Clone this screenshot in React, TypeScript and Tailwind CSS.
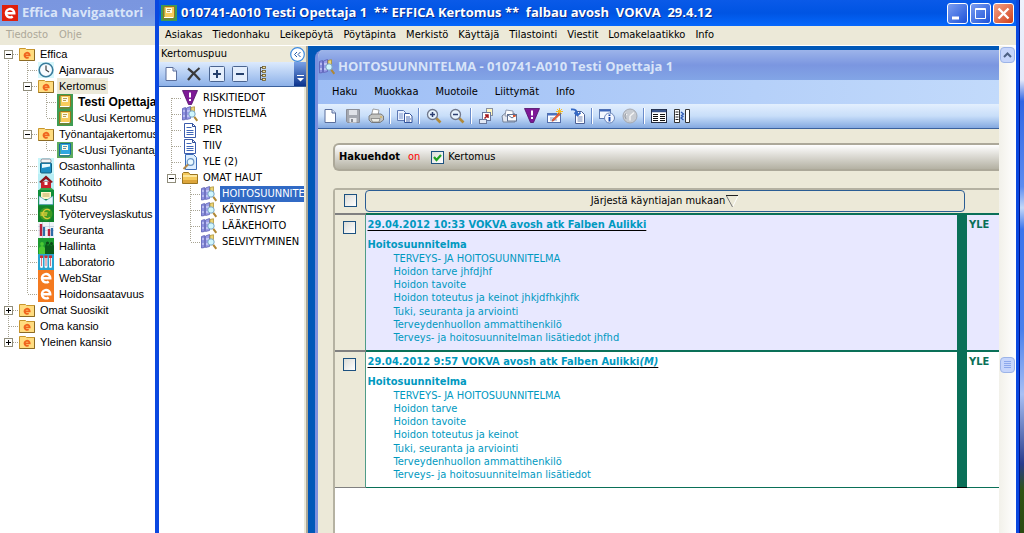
import React, { useState } from 'react';
import clsx from 'clsx';

interface TreeItem {
  label: string;
  icon: IconName;
  guides: string; // one character per indent level: | through, t branch, l last branch, f first
  toggle?: '+' | '-';
  bold?: boolean;
  selected?: 'soft' | 'strong';
}

interface Entry {
  title: string;
  mark?: string;
  lines: string[];
  tinted: boolean;
}

/* ---------- icons ---------- */

const EFolder = () => (
  <svg width="16" height="16" viewBox="0 0 16 16">
    <path d="M.5 2.500v12h15v-11H7.500l-1-1z" fill="#ffdc80" stroke="#c8962c" />
    <path d="M.5 14.500h15v-11" fill="none" stroke="#8c6a24" />
    <path d="M5.500 9.300h5.200a2.600 2.600 0 1 0-1 2.100" fill="none" stroke="#f0641e" strokeWidth="1.800" />
  </svg>
);

const EBox = ({ color, size = 16 }: { color: string; size?: number }) => (
  <svg width={size} height={size} viewBox="0 0 16 16">
    <rect width="16" height="16" fill={color} />
    <path d="M4 8.300h8.300a4.200 4.200 0 1 0-1.600 3.200" fill="none" stroke="#fff" strokeWidth="2.400" />
  </svg>
);

const Clock = () => (
  <svg width="16" height="16" viewBox="0 0 16 16">
    <rect width="16" height="16" fill="#d8f8fc" />
    <circle cx="8" cy="8" r="6.800" fill="#f8fcff" stroke="#3a7c9c" strokeWidth="1.600" />
    <path d="M8 3.500V8l3 2" fill="none" stroke="#444" strokeWidth="1.200" />
  </svg>
);

const Book = ({ back, fill, edge }: { back: string; fill: string; edge: string }) => (
  <svg width="16" height="16" viewBox="0 0 16 16">
    <rect width="16" height="16" fill={back} />
    <path d="M3.500 1.500h9.500v10.500H3.500z" fill={fill} />
    <path d="M2.500 2v12h9.500l1.500-2V1.500H4z" fill="none" stroke={edge} />
    <path d="M3 12.500h9.500" stroke="#fff" />
    <rect x="5" y="3" width="6" height="5" fill="#fffbe4" />
    <path d="M6 4.500h4M6 6.500h3" stroke={edge} strokeWidth=".7" />
  </svg>
);

const Bed = () => (
  <svg width="16" height="16" viewBox="0 0 16 16">
    <rect width="16" height="16" fill="#c9f6fb" />
    <rect x="3" y="1" width="10" height="4" rx="1.500" fill="#f4f4f4" stroke="#667" strokeWidth=".7" />
    <rect x="2.500" y="5" width="11" height="10" rx="1" fill="#1f8fc4" stroke="#12607f" />
    <path d="M4 6h8v2.500L4 10z" fill="#e8fbff" />
  </svg>
);

const House = () => (
  <svg width="16" height="16" viewBox="0 0 16 16">
    <rect width="16" height="16" fill="#b8eef5" />
    <path d="M1 16l3-3h8l4 3z" fill="#3aa044" />
    <path d="M3 7.500h10V14H3z" fill="#c8202c" />
    <path d="M1 8l7-6.500L15 8l-2 1-5-4-5 4z" fill="#8c141c" />
    <rect x="6.500" y="8" width="3" height="3" fill="#fff" />
  </svg>
);

const Invite = () => (
  <svg width="16" height="16" viewBox="0 0 16 16">
    <rect width="16" height="16" fill="#0f8f3a" />
    <rect x="3" y="2" width="10" height="7" fill="#fff6c8" />
    <path d="M4.500 4h7M4.500 6h7" stroke="#bfa75a" />
    <path d="M1 6l7 4.500L15 6v8.500H1z" fill="#e8f8ff" stroke="#4a94b8" strokeWidth=".6" />
  </svg>
);

const Euro = () => (
  <svg width="16" height="16" viewBox="0 0 16 16">
    <rect width="16" height="16" fill="#12822c" />
    <circle cx="8" cy="8" r="6.500" fill="#3f9a24" />
    <path d="M12 4.500A4.500 4.500 0 1 0 12 11.500M2.500 7h7M2.500 9h6.500" fill="none" stroke="#d8cc38" strokeWidth="1.300" />
  </svg>
);

const Bars = () => (
  <svg width="16" height="16" viewBox="0 0 16 16">
    <rect width="16" height="16" fill="#eef3f8" />
    <path d="M0 4.500h16M0 8.500h16M4.500 0v16M11.500 0v16" stroke="#bccbdc" strokeWidth=".7" />
    <path d="M3 2v12M11 7v7" stroke="#b8203c" strokeWidth="2.400" />
    <path d="M6 5v9M14 6v8" stroke="#2f6da8" strokeWidth="2.200" />
  </svg>
);

const Crowd = () => (
  <svg width="16" height="16" viewBox="0 0 16 16">
    <rect width="16" height="16" fill="#1c9a30" />
    <path d="M7 16V8q1-4 3 0 2-4 3 0 2-3 3 0v8z" fill="#0a5c1a" />
    <circle cx="9.500" cy="5" r="1.600" fill="#0b4a18" />
    <circle cx="13.500" cy="5.500" r="1.500" fill="#0b4a18" />
    <circle cx="4" cy="6" r="1.900" fill="#4cc834" />
    <path d="M1 16v-6q3-4 6 0v6z" fill="#4cc834" />
  </svg>
);

const Tubes = () => (
  <svg width="16" height="16" viewBox="0 0 16 16">
    <rect width="16" height="16" fill="#28a4d0" />
    {[2, 6.500, 11].map(x => (
      <g key={x}>
        <rect x={x} y="2" width="3" height="12" rx="1.500" fill="#eef6fa" />
        <rect x={x} y="1.500" width="3" height="2.500" fill="#d02c34" />
        <path d={`M${x + 1.500} 4v8`} stroke="#d8707c" />
      </g>
    ))}
  </svg>
);

const Alert = () => (
  <svg width="16" height="16" viewBox="0 0 16 16">
    <path d="M.5.500h15L9.500 14.500h-3z" fill="#7e1a96" stroke="#4e0c66" strokeWidth=".8" />
    <path d="M8 2.500v5" stroke="#fff" strokeWidth="2" />
    <rect x="7" y="9" width="2" height="2" fill="#fff" />
  </svg>
);

const BookSearch = () => (
  <svg width="16" height="16" viewBox="0 0 16 16">
    <path d="M.5 2.500l3-1v12l-3 .5z" fill="#8c90e0" stroke="#5a5eb4" strokeWidth=".8" />
    <path d="M4.500 2l4-1.500v12l-4 1z" fill="#9a9eea" stroke="#5a5eb4" strokeWidth=".8" />
    <path d="M9 1.500l3.500-.8v8H9z" fill="#ecd474" stroke="#a58a2c" strokeWidth=".7" />
    <path d="M1 5h2M5 5h3M1 10h2M5 10h2" stroke="#e4e6ff" />
    <circle cx="10" cy="8" r="3.200" fill="#d0f6fd" stroke="#7ba6c4" />
    <path d="M12.300 10.800l3 4" stroke="#b08834" strokeWidth="2" />
  </svg>
);

const Doc = () => (
  <svg width="16" height="16" viewBox="0 0 16 16">
    <path d="M2.500 1.500h8l3 3v11h-11z" fill="#fff" stroke="#3c5cac" />
    <path d="M10.500 1.500v3h3" fill="none" stroke="#2d4a94" />
    <path d="M4.500 5.500h5M4.500 8.500h7M4.500 10.500h7M4.500 12.500h7" stroke="#3f66b8" />
  </svg>
);

const DocSearch = () => (
  <svg width="16" height="16" viewBox="0 0 16 16">
    <path d="M3.500.5h8l3 3v12h-11z" fill="#dceeff" stroke="#3b6cb8" />
    <circle cx="8.500" cy="8" r="3.300" fill="#eafaff" stroke="#6a94c4" strokeWidth="1.200" />
    <path d="M6 10.500L1.500 15" stroke="#b48a4a" strokeWidth="2" />
  </svg>
);

const Folder = () => (
  <svg width="16" height="16" viewBox="0 0 16 16">
    <path d="M.5 3.500v10h15v-9H8L6.500 2.500h-5z" fill="#f4c95a" stroke="#9a7420" />
    <path d="M1 6h14" stroke="#fff0b4" strokeWidth="1.500" />
    <path d="M1 10h14v3H1z" fill="#dca53a" />
  </svg>
);

const Page = () => (
  <svg width="16" height="16" viewBox="0 0 16 16">
    <path d="M3 1.500h7l3.500 3.500v9.500H3z" fill="#fff" stroke="#5b6f9c" />
    <path d="M10 1.500V5h3.500" fill="#d5e1f8" stroke="#5b6f9c" />
  </svg>
);

const Cross = () => (
  <svg width="16" height="16" viewBox="0 0 16 16">
    <path d="M2 2.500Q8 7 14 14M13.500 2Q7 7 2 14" fill="none" stroke="#3a3a3a" strokeWidth="2.200" />
  </svg>
);

const BoxSign = ({ plus }: { plus?: boolean }) => (
  <svg width="16" height="16" viewBox="0 0 16 16">
    <rect x=".5" y=".5" width="15" height="15" rx="1" fill="#e4eefc" stroke="#4a6490" />
    <path d={plus ? 'M4 8h8M8 4v8' : 'M4 8h8'} stroke="#25406c" strokeWidth="2" />
  </svg>
);

const Chain = () => (
  <svg width="16" height="16" viewBox="0 0 16 16">
    <path d="M5.500 1v13M5 1.500h2M5 5.500h2M5 9.500h2M5 13.500h2" stroke="#555" fill="none" />
    {[.5, 4.500, 8.500, 12.500].map(y => (
      <rect key={y} x="7.500" y={y} width="3" height="2" fill="#f4e2a0" stroke="#6b5a28" strokeWidth=".8" />
    ))}
  </svg>
);

const Disk = () => (
  <svg width="16" height="16" viewBox="0 0 16 16">
    <path d="M1.500 1.500h13v13h-12l-1-1z" fill="#a4a8b0" stroke="#8a8e98" />
    <rect x="4" y="2" width="8" height="5" fill="#dfe2e8" />
    <rect x="4.500" y="10" width="7" height="4.500" fill="#e6e8ec" />
    <rect x="6" y="11" width="2" height="3" fill="#878b94" />
  </svg>
);

const Printer = () => (
  <svg width="16" height="16" viewBox="0 0 16 16">
    <path d="M5 1l6 1-1 5H3.500z" fill="#fff" stroke="#8a8a8a" strokeWidth=".8" />
    <path d="M1 8l3-2h9l2.500 2v4l-3.500 2.500H3.500L1 12z" fill="#c4c4c0" stroke="#6a6a6a" strokeWidth=".8" />
    <path d="M3 10.500h9l-1 3.500H4.500z" fill="#ecebe4" stroke="#777" strokeWidth=".7" />
    <path d="M12 9h2" stroke="#dcae34" strokeWidth="1.200" />
  </svg>
);

const Copy = () => (
  <svg width="16" height="16" viewBox="0 0 16 16">
    <path d="M.5 2.500h6l2 2v8h-8z" fill="#e8f0ff" stroke="#5c78b4" />
    <path d="M2 6h4M2 8h4M2 10h4" stroke="#7c96cc" />
    <path d="M7.500 5.500h5l2.500 2.500v6.500H7.500z" fill="#fff" stroke="#34549c" />
    <path d="M9 9h4M9 11h5M9 13h4" stroke="#4a6cb4" />
  </svg>
);

const Zoom = ({ plus }: { plus?: boolean }) => (
  <svg width="16" height="16" viewBox="0 0 16 16">
    <path d="M10 10l4.500 4.500" stroke="#b08a3c" strokeWidth="2.600" />
    <circle cx="6.500" cy="6.500" r="5" fill="#e6f2fc" stroke="#70788c" strokeWidth="1.300" />
    <path d={plus ? 'M4 6.500h5M6.500 4v5' : 'M4 6.500h5'} stroke="#2c3e70" strokeWidth="1.500" />
  </svg>
);

const Export = () => (
  <svg width="16" height="16" viewBox="0 0 16 16">
    <rect x="8.500" y=".5" width="6" height="7" fill="#fff6bc" stroke="#8890a0" />
    <rect x="4.500" y="4.500" width="8" height="8" fill="#fff" stroke="#68789c" />
    <rect x="1.500" y="11.500" width="7" height="4" fill="#e2e8f4" stroke="#68789c" />
    <path d="M6.500 10.500l3.500-3.500M7 7h3v3" fill="none" stroke="#a4181c" strokeWidth="1.500" />
  </svg>
);

const Mail = () => (
  <svg width="16" height="16" viewBox="0 0 16 16">
    <path d="M1 8l6-5 7 3v8H2z" fill="#e4e9f2" stroke="#6c7890" strokeWidth=".9" />
    <path d="M5 2l7 1v5H4z" fill="#fff" stroke="#78849c" strokeWidth=".8" />
    <rect x="6.500" y="6.500" width="9" height="6.500" fill="#fff" stroke="#5f7090" />
    <path d="M7 7l4 3 4-3" fill="none" stroke="#5f7090" />
    <rect x="12" y="7" width="2.500" height="2" fill="#e0562c" />
  </svg>
);

const Compose = () => (
  <svg width="16" height="16" viewBox="0 0 16 16">
    <rect x=".5" y="5.500" width="13" height="9" fill="#fff" stroke="#5470ac" />
    <path d="M1 6.500h12" stroke="#4a72c4" strokeWidth="2" />
    <path d="M3 10h4M3 12h7" stroke="#7f96c4" />
    <path d="M12.500 0v7M9 3.500h7M10 1l5 5M15 1l-5 5" stroke="#f4bc28" />
    <path d="M13 6.500l-6 6-2 .8.800-2 6-6z" fill="#f0603c" stroke="#b43c20" strokeWidth=".6" />
  </svg>
);

const Import = () => (
  <svg width="16" height="16" viewBox="0 0 16 16">
    <path d="M5.500 3.500h6l3 3v9h-9z" fill="#fff" stroke="#4c6094" />
    <path d="M7.500 9h5M7.500 11h5M7.500 13h5" stroke="#7486b4" />
    <path d="M1 1.500q6-1 6.500 5M4.500 4.500l3 3 3-3" fill="none" stroke="#3468c4" strokeWidth="1.800" />
  </svg>
);

const Details = () => (
  <svg width="16" height="16" viewBox="0 0 16 16">
    <rect x=".5" y="1.500" width="11" height="9" fill="#f4f8ff" stroke="#5c78b0" />
    <path d="M1 2.500h10" stroke="#3f66b8" strokeWidth="2" />
    <circle cx="10.500" cy="10" r="5" fill="#f2f6ff" stroke="#6c86b8" />
    <path d="M10.500 9v4.500M10.500 6.500v1.500" stroke="#1c48a8" strokeWidth="1.900" />
  </svg>
);

const History = () => (
  <svg width="16" height="16" viewBox="0 0 16 16">
    <circle cx="8" cy="8" r="7" fill="#c8ccd2" stroke="#a4a8b0" />
    <path d="M8 8l4-3.500M8 8v4.500M3 5l2 2" stroke="#f4f4f4" strokeWidth="1.500" />
    <path d="M4 11a5 5 0 0 1 0-6" fill="none" stroke="#989ca4" />
  </svg>
);

const Columns = () => (
  <svg width="16" height="16" viewBox="0 0 16 16">
    <rect x=".5" y="1.500" width="15" height="13" fill="#fff" stroke="#222c44" />
    <path d="M1 3h14" stroke="#38548c" strokeWidth="2.500" />
    <path d="M2 6.500h5M2 8.500h5M2 10.500h5M2 12.500h5M9 6.500h5M9 8.500h5M9 10.500h5M9 12.500h5" stroke="#111" />
  </svg>
);

const Split = () => (
  <svg width="16" height="16" viewBox="0 0 16 16">
    <path d="M.5 1.500h5v13h-5zM11.500 1.500h4v13h-4z" fill="#fff" stroke="#333" />
    <path d="M1.500 4h3M1.500 6.500h3M1.500 9h3M1.500 11.500h3" stroke="#222" />
    <path d="M7 4l2.500 2L7 8M9.500 8L7 10l2.500 2" fill="none" stroke="#2c58b4" strokeWidth="1.300" />
  </svg>
);

const icons = {
  eFolder: <EFolder />,
  clock: <Clock />,
  book: <Book back="#3f9c52" fill="#f8cc5c" edge="#96741c" />,
  blueBook: <Book back="#5cab5e" fill="#2fa8e0" edge="#16689c" />,
  bed: <Bed />,
  house: <House />,
  invite: <Invite />,
  euro: <Euro />,
  bars: <Bars />,
  crowd: <Crowd />,
  tubes: <Tubes />,
  web: <EBox color="#f47a20" />,
  alert: <Alert />,
  bookSearch: <BookSearch />,
  doc: <Doc />,
  docSearch: <DocSearch />,
  folder: <Folder />,
  page: <Page />,
  cross: <Cross />,
  plusBox: <BoxSign plus />,
  minusBox: <BoxSign />,
  chain: <Chain />,
  disk: <Disk />,
  printer: <Printer />,
  copy: <Copy />,
  zoomIn: <Zoom plus />,
  zoomOut: <Zoom />,
  export: <Export />,
  mail: <Mail />,
  compose: <Compose />,
  import: <Import />,
  details: <Details />,
  history: <History />,
  columns: <Columns />,
  split: <Split />
};

type IconName = keyof typeof icons;

/* ---------- data ---------- */

const navTree: TreeItem[] = [
  { label: 'Effica', icon: 'eFolder', guides: 'f', toggle: '-' },
  { label: 'Ajanvaraus', icon: 'clock', guides: '|t' },
  { label: 'Kertomus', icon: 'eFolder', guides: '|t', toggle: '-', selected: 'soft' },
  { label: 'Testi Opettaja', icon: 'book', guides: '||t', bold: true },
  { label: '<Uusi Kertomus>', icon: 'book', guides: '||l' },
  { label: 'Työnantajakertomus', icon: 'eFolder', guides: '|t', toggle: '-' },
  { label: '<Uusi Työnantaj', icon: 'blueBook', guides: '||l' },
  { label: 'Osastonhallinta', icon: 'bed', guides: '|t' },
  { label: 'Kotihoito', icon: 'house', guides: '|t' },
  { label: 'Kutsu', icon: 'invite', guides: '|t' },
  { label: 'Työterveyslaskutus', icon: 'euro', guides: '|t' },
  { label: 'Seuranta', icon: 'bars', guides: '|t' },
  { label: 'Hallinta', icon: 'crowd', guides: '|t' },
  { label: 'Laboratorio', icon: 'tubes', guides: '|t' },
  { label: 'WebStar', icon: 'web', guides: '|t' },
  { label: 'Hoidonsaatavuus', icon: 'web', guides: '|l' },
  { label: 'Omat Suosikit', icon: 'eFolder', guides: 't', toggle: '+' },
  { label: 'Oma kansio', icon: 'eFolder', guides: 't' },
  { label: 'Yleinen kansio', icon: 'eFolder', guides: 'l', toggle: '+' }
];

const recordTree: TreeItem[] = [
  { label: 'RISKITIEDOT', icon: 'alert', guides: 'f' },
  { label: 'YHDISTELMÄ', icon: 'bookSearch', guides: 't' },
  { label: 'PER', icon: 'doc', guides: 't' },
  { label: 'TIIV', icon: 'doc', guides: 't' },
  { label: 'YLE (2)', icon: 'docSearch', guides: 't' },
  { label: 'OMAT HAUT', icon: 'folder', guides: 'l', toggle: '-' },
  { label: 'HOITOSUUNNITE', icon: 'bookSearch', guides: ' t', selected: 'strong' },
  { label: 'KÄYNTISYY', icon: 'bookSearch', guides: ' t' },
  { label: 'LÄÄKEHOITO', icon: 'bookSearch', guides: ' t' },
  { label: 'SELVIYTYMINEN', icon: 'bookSearch', guides: ' l' }
];

const mainMenu = [
  'Asiakas', 'Tiedonhaku', 'Leikepöytä', 'Pöytäpinta', 'Merkistö',
  'Käyttäjä', 'Tilastointi', 'Viestit', 'Lomakelaatikko', 'Info'
];

const viewMenu = ['Haku', 'Muokkaa', 'Muotoile', 'Liittymät', 'Info'];

const viewTools: [IconName, string][][] = [
  [['page', 'Uusi'], ['disk', 'Tallenna'], ['printer', 'Tulosta']],
  [['copy', 'Kopioi']],
  [['zoomIn', 'Suurenna'], ['zoomOut', 'Pienennä']],
  [['export', 'Vie'], ['mail', 'Viesti'], ['alert', 'Riskitiedot'], ['compose', 'Kirjaa'], ['import', 'Tuo']],
  [['details', 'Tiedot'], ['history', 'Historia']],
  [['columns', 'Sarakkeet'], ['split', 'Jako']]
];

const recordTools: [IconName, string][] = [
  ['page', 'Uusi'],
  ['cross', 'Poista'],
  ['plusBox', 'Avaa kaikki'],
  ['minusBox', 'Sulje kaikki'],
  ['chain', 'Rakenne']
];

const entries: Entry[] = [
  {
    title: '29.04.2012 10:33 VOKVA avosh atk Falben Aulikki',
    tinted: true,
    lines: [
      'TERVEYS- JA HOITOSUUNNITELMA',
      'Hoidon tarve jhfdjhf',
      'Hoidon tavoite',
      'Hoidon toteutus ja keinot jhkjdfhkjhfk',
      'Tuki, seuranta ja arviointi',
      'Terveydenhuollon ammattihenkilö',
      'Terveys- ja hoitosuunnitelman lisätiedot jhfhd'
    ]
  },
  {
    title: '29.04.2012 9:57 VOKVA avosh atk Falben Aulikki',
    mark: '(M)',
    tinted: false,
    lines: [
      'TERVEYS- JA HOITOSUUNNITELMA',
      'Hoidon tarve',
      'Hoidon tavoite',
      'Hoidon toteutus ja keinot',
      'Tuki, seuranta ja arviointi',
      'Terveydenhuollon ammattihenkilö',
      'Terveys- ja hoitosuunnitelman lisätiedot'
    ]
  }
];

/* ---------- parts ---------- */

const guidePaths: Record<string, string> = {
  '|': 'M8.500 0V16',
  t: 'M8.500 0V16M8.500 8.500H19',
  l: 'M8.500 0V8M8.500 8.500H19',
  f: 'M8.500 8V16M8.500 8.500H19',
  ' ': ''
};

const Guide = ({ kind, toggle }: { kind: string; toggle?: '+' | '-' }) => (
  <svg width="19" height="16" viewBox="0 0 19 16" className="shrink-0" shapeRendering="crispEdges">
    <path d={guidePaths[kind]} stroke="#a8a493" strokeDasharray="1 1" fill="none" />
    {toggle && (
      <>
        <rect x="4.500" y="4.500" width="8" height="8" fill="#fff" stroke="#8f8c7a" />
        <path d={toggle === '+' ? 'M6 8.500h5M8.500 6v5' : 'M6 8.500h5'} stroke="#000" />
      </>
    )}
  </svg>
);

const Tree = ({ items, label }: { items: TreeItem[]; label: string }) => (
  <ul aria-label={label}>
    {items.map((item, i) => (
      <li key={i} className="flex h-4 items-center whitespace-nowrap">
        {item.guides.split('').map((g, n) => (
          <Guide key={n} kind={g} toggle={n === item.guides.length - 1 ? item.toggle : undefined} />
        ))}
        <span className="shrink-0">{icons[item.icon]}</span>
        <span
          className={clsx(
            'ml-[3px] h-4 px-[2px] leading-4',
            item.bold && 'text-[12px] font-bold',
            item.selected === 'soft' && 'bg-[#ece9d8]',
            item.selected === 'strong' && 'bg-[#316ac5] text-white'
          )}
        >
          {item.label}
        </span>
      </li>
    ))}
  </ul>
);

const Tool = ({ icon, label }: { icon: IconName; label: string }) => (
  <button aria-label={label} title={label} className="flex h-6 w-[23px] shrink-0 items-center justify-center">
    {icons[icon]}
  </button>
);

const CheckBox = ({ label, initial = false }: { label: string; initial?: boolean }) => {
  const [checked, setChecked] = useState(initial);
  return (
    <span className="relative inline-flex h-[13px] w-[13px] shrink-0">
      <input
        type="checkbox"
        aria-label={label}
        checked={checked}
        onChange={() => setChecked(!checked)}
        className="h-[13px] w-[13px] appearance-none border border-[#1c5180] bg-linear-to-br from-[#dcdcd7] to-white"
      />
      {checked && (
        <svg viewBox="0 0 13 13" className="pointer-events-none absolute inset-0">
          <path d="M3 6l2.500 3L10 4" fill="none" stroke="#21a121" strokeWidth="2.200" />
        </svg>
      )}
    </span>
  );
};

const Navigator = () => (
  <aside className="flex w-[155px] shrink-0 flex-col overflow-hidden bg-white font-['Liberation_Sans',Arial,sans-serif] text-[11px]">
    <header className="flex h-[26px] shrink-0 items-center gap-1 bg-linear-to-b from-[#7a96df] via-[#7b97e0] to-[#82a5e4] pl-[2px]">
      <EBox color="#e0200c" />
      <h1 className="whitespace-nowrap font-['Open_Sans',sans-serif] text-[13px] font-bold text-[#d8e4f8]">Effica Navigaattori</h1>
    </header>
    <nav className="mb-px flex h-[19px] shrink-0 items-center gap-[11px] bg-[#ece9d8] pl-[6px] font-['DejaVu_Sans_Condensed',Tahoma,sans-serif] text-[#aca899]">
      <button>Tiedosto</button>
      <button>Ohje</button>
    </nav>
    <Tree items={navTree} label="Effica" />
  </aside>
);

const RecordPanel = () => (
  <section className="flex w-[147px] shrink-0 flex-col overflow-hidden bg-[#ece9d8]">
    <header className="flex h-4 shrink-0 items-center justify-between pl-[2px]">
      <h2>Kertomuspuu</h2>
      <button aria-label="Piilota" className="mr-px">
        <svg width="15" height="15" viewBox="0 0 15 15">
          <circle cx="7.500" cy="7.500" r="6.800" fill="#fff" stroke="#3c8ae0" strokeWidth="1.200" />
          <path d="M7 5L4.500 7.500 7 10M10.500 5L8 7.500l2.500 2.500" fill="none" stroke="#2458a8" />
        </svg>
      </button>
    </header>
    <div className="flex h-[25px] shrink-0 items-center justify-between border-b border-[#3b619c] bg-linear-to-b from-[#dceafd] to-[#8db1e8]">
      <div className="flex">
        {recordTools.map(([icon, label]) => <Tool key={label} icon={icon} label={label} />)}
      </div>
      <button aria-label="Lisää" className="flex h-full w-3 items-end justify-center bg-linear-to-b from-[#7ba2e7] to-[#0a328c] pb-1">
        <svg width="7" height="7" viewBox="0 0 7 7">
          <path d="M0 .5h7" stroke="#fff" />
          <path d="M0 3h7L3.500 6.500z" fill="#fff" />
        </svg>
      </button>
    </div>
    <div className="mr-[2px] flex-1 overflow-hidden bg-white pl-1 pt-[3px]">
      <Tree items={recordTree} label="Kertomuspuu" />
    </div>
  </section>
);

const EntryTable = () => (
  <table className="w-full table-fixed border-collapse text-left">
    <colgroup>
      <col className="w-[30px]" />
      <col />
      <col className="w-[10px]" />
      <col className="w-8" />
    </colgroup>
    <thead>
      <tr className="h-6 bg-[#ece9d8]">
        <th className="border-b-2 border-[#808080] p-0 text-center leading-none">
          <CheckBox label="Valitse kaikki" />
        </th>
        <th colSpan={2} className="border-b-2 border-[#0a7058] p-0 pb-px pr-[2px] font-normal">
          <button className="flex h-[22px] w-full items-center justify-center rounded border border-[#2a5d94]">
            Järjestä käyntiajan mukaan
            <svg width="14" height="14" viewBox="0 0 14 14">
              <path d="M13 2L7.500 13" stroke="#fff" />
              <path d="M1 1.500h12" stroke="#222" />
              <path d="M1.500 2l6 11" stroke="#777" />
            </svg>
          </button>
        </th>
        <th className="border-b-2 border-[#0a7058] p-0" />
      </tr>
    </thead>
    <tbody className="[&>tr:last-child>td]:border-b">
      {entries.map(entry => (
        <tr key={entry.title} className={clsx('align-top', entry.tinted ? 'bg-[#e8e8ff]' : 'bg-white')}>
          <td className="border-b-2 border-r border-b-[#808080] border-r-[#4f9c88] bg-[#ece9d8] p-0 pt-[6px] text-center leading-none">
            <CheckBox label={entry.title} />
          </td>
          <td className="border-b-2 border-[#0a7058] p-0 pb-[6px] pl-[2px] pt-[3px] text-[#0099bf]">
            <a href="#entry" className="block font-bold leading-[14px] underline decoration-black decoration-1 underline-offset-2">
              {entry.title}
              {entry.mark && <em>{entry.mark}</em>}
            </a>
            <h3 className="mt-[6px] font-bold leading-[14px]">Hoitosuunnitelma</h3>
            <ul className="flex h-[92px] flex-col justify-between pl-[26px] leading-[13px]">
              {entry.lines.map(line => <li key={line}>{line}</li>)}
            </ul>
          </td>
          <td className="bg-[#0a7058] p-0" />
          <td className="border-b-2 border-[#0a7058] p-0 pl-[2px] pt-[3px] font-bold leading-[14px] text-[#0a7058]">YLE</td>
        </tr>
      ))}
    </tbody>
  </table>
);

const RecordView = () => (
  <section className="mt-1 flex min-w-0 flex-1 flex-col overflow-hidden rounded-tl-lg border-l-[3px] border-[#7b90de] bg-[#ece9d8]">
    <header className="flex h-[30px] shrink-0 items-center gap-[3px] bg-linear-to-b from-[#9db4ea] via-[#7b96e0] to-[#82a5e6] pl-px pt-1">
      {icons.bookSearch}
      <h2 className="whitespace-nowrap font-['Open_Sans',sans-serif] text-[13px] font-bold text-[#d8e4f8]">
        HOITOSUUNNITELMA - 010741-A010 Testi Opettaja 1
      </h2>
    </header>
    <nav className="flex h-6 shrink-0 items-center gap-[17px] bg-linear-to-r from-[#9ebef5] to-[#c2dafb] pl-[14px]">
      {viewMenu.map(name => <button key={name}>{name}</button>)}
    </nav>
    <div className="flex h-[25px] shrink-0 items-center border-b border-[#3b619c] bg-linear-to-b from-[#e3effe] via-[#c8def9] to-[#84a9e0]">
      {viewTools.map((group, i) => (
        <React.Fragment key={i}>
          {i > 0 && <span className="mx-[2px] h-4 w-[2px] shrink-0 border-l border-[#6a8ccb] bg-white" />}
          {group.map(([icon, label]) => <Tool key={label} icon={icon} label={label} />)}
        </React.Fragment>
      ))}
    </div>
    <div className="flex flex-1 flex-col pl-[15px] pt-[14px]">
      <div className="flex h-7 shrink-0 items-center rounded-l-md border-2 border-r-0 border-[#aca899] bg-linear-to-b from-white to-[#b4b1a3] pl-1">
        <strong>Hakuehdot</strong>
        <span className="ml-2 text-[#ff0000]">on</span>
        <label className="ml-[11px] flex items-center gap-1">
          <CheckBox label="Kertomus" initial />
          Kertomus
        </label>
      </div>
      <div className="mt-[17px] flex-1 rounded-tl border-l-2 border-t-2 border-[#b5b2a2] bg-white">
        <EntryTable />
      </div>
    </div>
  </section>
);

const ScrollBar = () => (
  <div className="flex w-[17px] shrink-0 flex-col items-center bg-linear-to-r from-[#f2f1ea] to-white pt-px">
    <button aria-label="Ylös" className="flex h-4 w-[15px] items-center justify-center rounded-sm border border-[#9cb4e8] bg-[#c6d5fb]">
      <svg width="9" height="6" viewBox="0 0 9 6">
        <path d="M1 5l3.500-3.500L8 5" fill="none" stroke="#4d6185" strokeWidth="2" />
      </svg>
    </button>
    <div className="grow-[294]" />
    <button aria-label="Vieritä" className="flex h-4 w-[15px] items-center justify-center rounded-sm border border-[#9cb4e8] bg-[#c6d5fb]">
      <svg width="7" height="8" viewBox="0 0 7 8">
        <path d="M0 .5h7M0 2.500h7M0 4.500h7M0 6.500h7" stroke="#8ca8ec" />
      </svg>
    </button>
    <div className="grow-[160]" />
  </div>
);

const frameButton = 'flex h-[21px] w-[21px] items-center justify-center rounded-[3px] border border-white';

const MainWindow = () => (
  <main className="flex min-w-0 flex-1 flex-col border-l-4 border-r-[3px] border-[#0a48e0] bg-[#ece9d8]">
    <header className="flex h-[26px] shrink-0 items-center bg-linear-to-b from-[#0a5ae8] via-[#0054e3] to-[#0668fc] pl-[2px] pr-[2px]">
      {icons.book}
      <h1 className="ml-1 flex-1 overflow-hidden whitespace-pre font-['Open_Sans',sans-serif] text-[13px] font-bold text-white [text-shadow:1px_1px_#0a2c8c]">
        {'010741-A010 Testi Opettaja 1  ** EFFICA Kertomus **  falbau avosh  VOKVA  29.4.12'}
      </h1>
      <div className="flex gap-[2px]">
        <button aria-label="Pienennä" className={clsx(frameButton, 'bg-linear-to-br from-[#7b9cf0] to-[#1c50d8]')}>
          <svg width="13" height="13" viewBox="0 0 13 13"><path d="M1 11h7" stroke="#fff" strokeWidth="3" /></svg>
        </button>
        <button aria-label="Suurenna" className={clsx(frameButton, 'bg-linear-to-br from-[#7b9cf0] to-[#1c50d8]')}>
          <svg width="13" height="13" viewBox="0 0 13 13"><path d="M1.500 1.500h10v10h-10zM1 2.500h11" fill="none" stroke="#fff" /></svg>
        </button>
        <button aria-label="Sulje" className={clsx(frameButton, 'bg-linear-to-br from-[#f0a084] to-[#d03c10]')}>
          <svg width="13" height="13" viewBox="0 0 13 13"><path d="M1.500 1.500l10 10M11.500 1.500l-10 10" stroke="#fff" strokeWidth="2.400" /></svg>
        </button>
      </div>
    </header>
    <nav className="flex h-5 shrink-0 items-center gap-[10px] border-b border-white pl-[6px]">
      {mainMenu.map(name => <button key={name}>{name}</button>)}
    </nav>
    <div className="flex min-h-0 flex-1">
      <RecordPanel />
      <div className="flex min-w-0 flex-1 border-l-2 border-[#aca899] bg-[#0058b8] pl-[7px]">
        <RecordView />
      </div>
      <ScrollBar />
    </div>
  </main>
);

export default function App() {
  return (
    <div className="flex h-screen overflow-hidden font-['DejaVu_Sans_Condensed',Tahoma,sans-serif] text-[11px] text-black">
      <Navigator />
      <MainWindow />
      <div className="w-[5px] shrink-0 border-l border-[#00138c] bg-[linear-gradient(#eef2fc_0%,#e4e8f8_15%,#2f66e4_19%,#5c8cf0_35%,#c4d8f8_39%,#3a74ec_43%,#4a80ec_62%,#a8c0f4_74%,#283c8c_87%,#2f5414_92%,#2a4a12_100%)]" />
    </div>
  );
}
